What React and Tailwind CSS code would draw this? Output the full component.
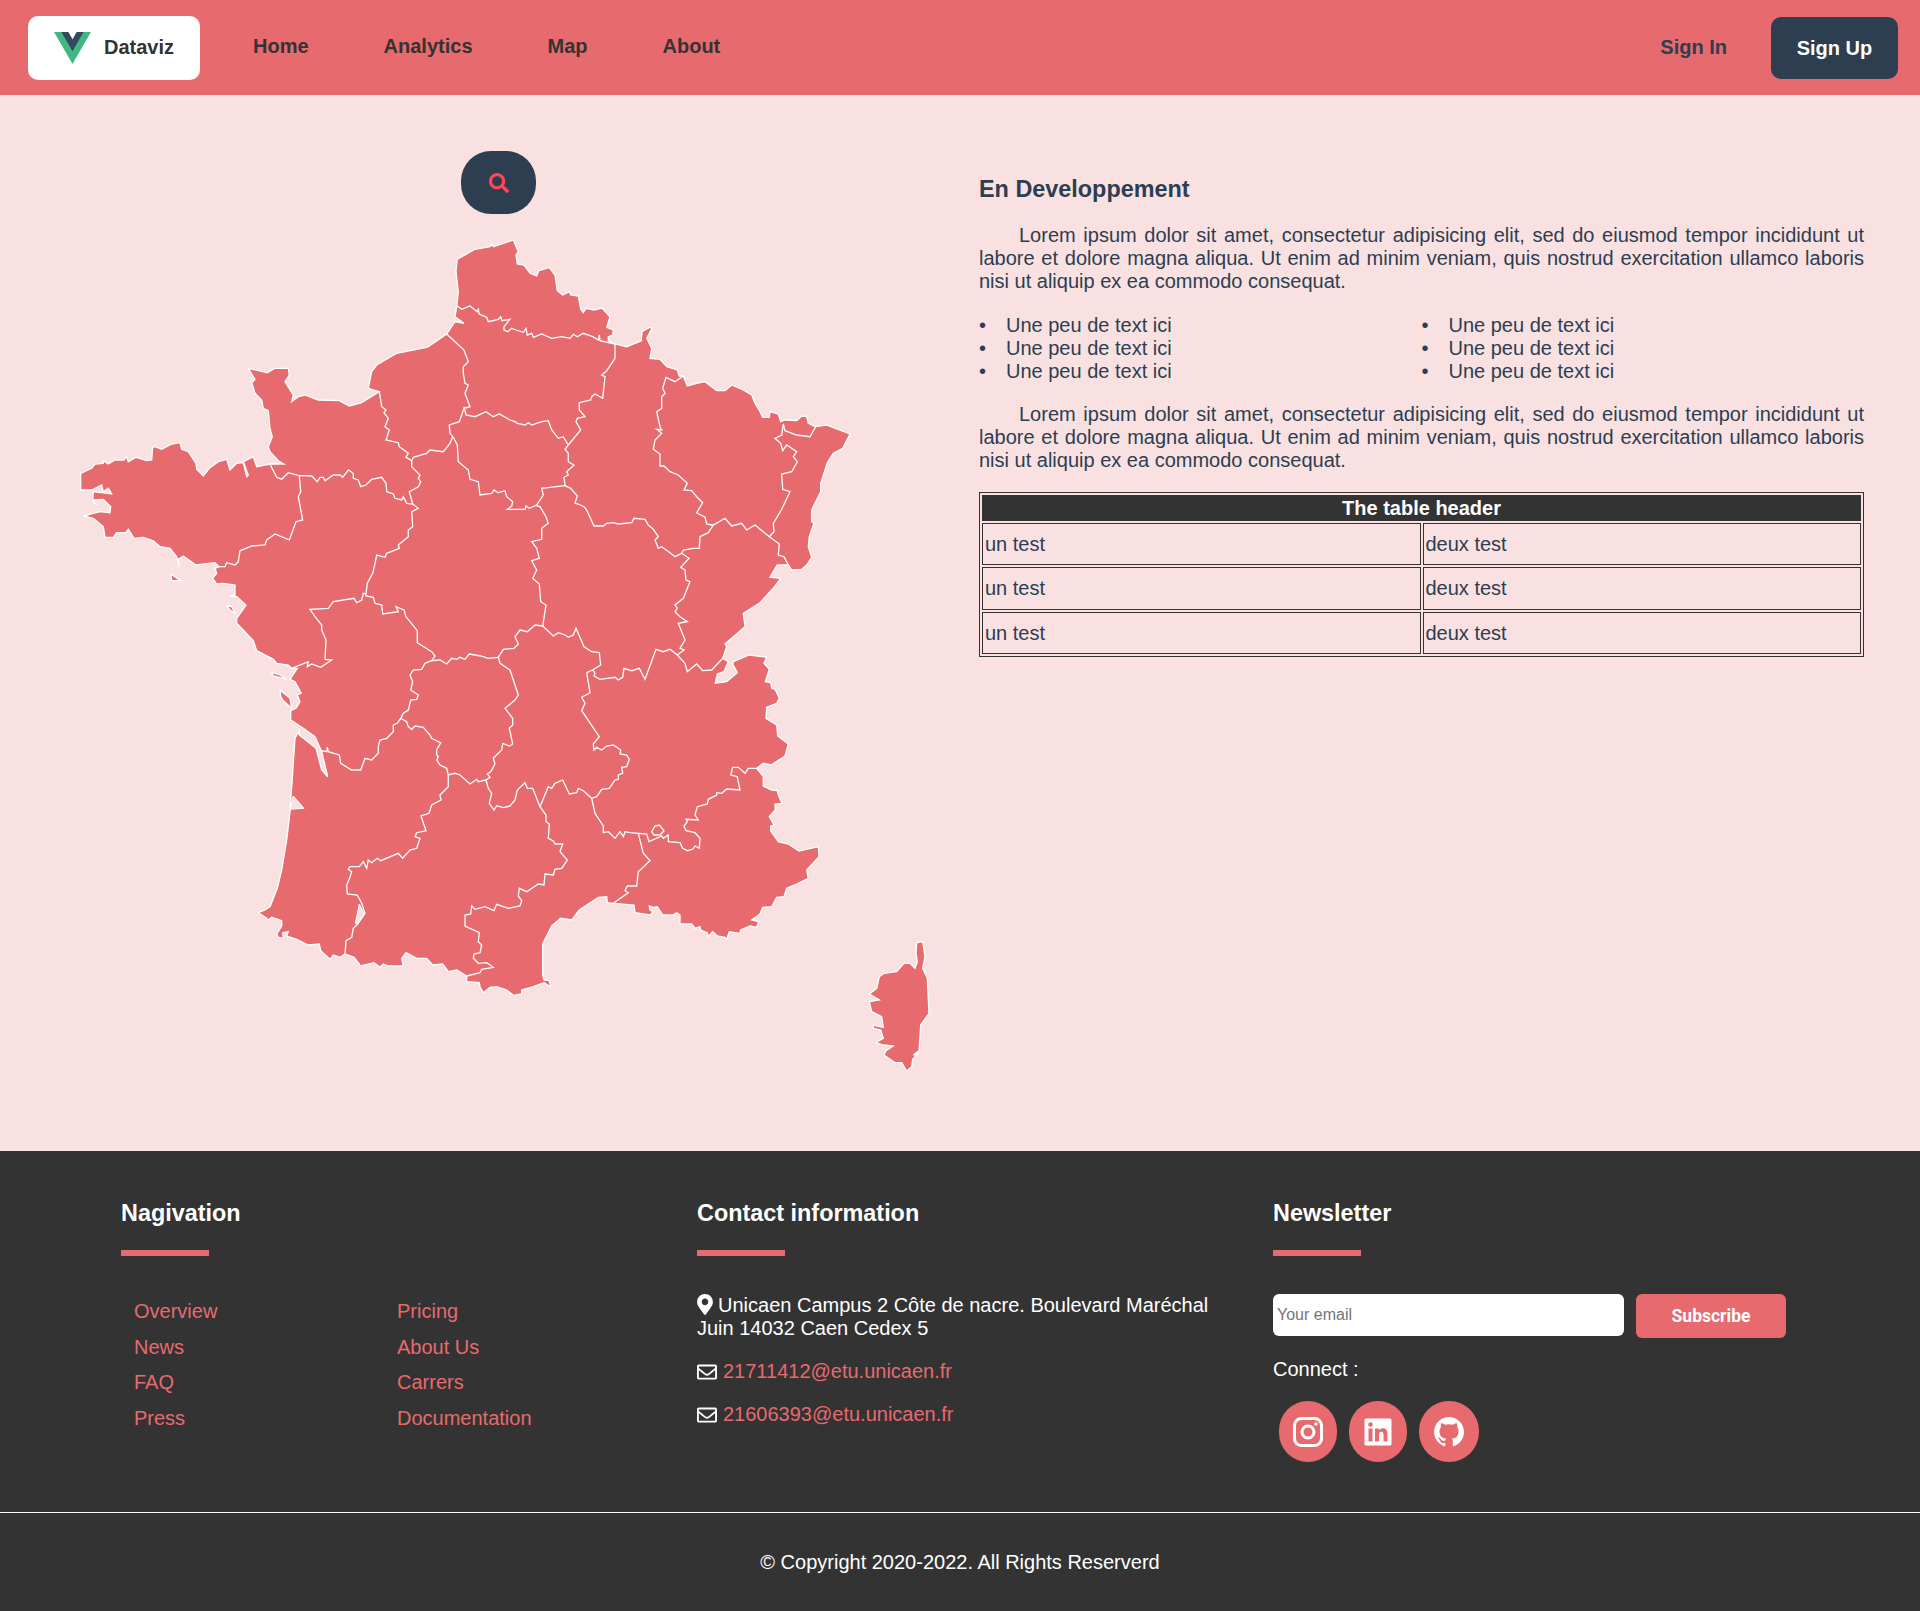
import { FaSearch, FaMapMarkerAlt, FaRegEnvelope } from "react-icons/fa";
import { BiLogoLinkedinSquare, BiLogoGithub } from "react-icons/bi";

// map coordinates were traced in four crops of the page, each with its own origin
const A = [60, 220];
const B = [440, 220];
const C = [240, 640];
const D = [600, 640];

const pts = (o, s) =>
  s.trim().split(/\s+/).map((p) => {
    const [x, y] = p.split(",").map(Number);
    return `${(o[0] + x / 3).toFixed(1)},${(o[1] + y / 3).toFixed(1)}`;
  }).join(" ");

const mainland = [
  pts(B, "52,118 105,88 150,80 155,72 160,80 190,70 220,60 235,95 228,105 232,132 252,135 270,160 290,168 296,152 328,143 345,165 352,212 368,225 388,215 392,225 415,228 422,268 430,278 438,265 462,270 486,264 510,290 500,322 520,330 518,345 505,350 505,362 525,372 560,380 604,362 606,335 630,322 636,325 620,355 635,385 630,415 660,418 680,440 712,450 718,468 730,468 742,498 770,490 795,485 830,512 855,512 875,495 910,510 935,525 945,550 960,575 968,592 988,592 990,575 1015,582 1022,605 1035,600 1070,602 1085,588 1100,590 1105,610 1125,620 1160,615 1178,622 1230,642 1208,685 1180,700 1162,728 1142,790 1142,815 1115,870 1115,905 1122,910 1108,950 1105,980 1115,1012 1100,1035 1085,1048 1055,1050 1045,1035 1012,1035 990,1072 1022,1075 1000,1105 960,1148 910,1180 915,1220 855,1272 860,1280 848,1315 865,1325 852,1355 832,1362 826,1390 860,1385 892,1358 878,1332 880,1325 928,1305 980,1312 972,1330 988,1348 976,1385 992,1388 995,1405 1005,1408 1018,1435 1010,1450 980,1462"),
  pts(D, "498,235 530,255 533,288 565,312 555,348 513,375 490,370 470,385 490,410 490,438 515,450 532,452 535,465 546,490 525,492 526,510 508,530 522,555 512,558 512,572 535,605 565,612 597,633 655,620 657,650 620,690 625,715 590,732 560,745 552,770 530,772 515,800 488,802 480,822 455,840 476,845 470,862 450,858 422,870 420,880 388,875 380,898 375,892 352,888 338,875 325,890 322,878 302,870 300,860 285,865 275,852 240,852 240,825 230,818 218,825 188,825 172,800 160,802 148,798 150,810 160,815 150,825 105,818 102,795 40,790"),
  pts(C, "1102,788 1100,770 1075,772 1055,785 1018,810 995,840 962,835 935,858 908,912 908,1005 912,1020 928,1022 932,1040 912,1028 880,1040 845,1050 845,1062 820,1066 800,1050 770,1040 750,1042 730,1058 720,1040 718,1028 680,1025 680,1008 650,990 625,995 608,972 578,975 560,955 530,955 498,938 485,955 490,978 445,978 430,972 420,982 402,968 362,978 342,952 315,942 300,952 280,945 270,958 242,932 238,912 205,915 170,898 140,888 145,875 128,878 130,895 115,892 110,882 125,858 125,842 95,832 85,840 80,835 55,818 75,810 90,800 112,745 125,690 140,600 150,515 165,295 178,272 178,285 228,325 245,390 263,410 245,335 225,290 190,265 152,240 152,212 168,205 180,185 172,165 184,160 165,125 150,118 172,85"),
  pts(A, "695,1345 685,1335 650,1330 640,1318 590,1292 580,1262 530,1210 530,1195 558,1155 530,1130 510,1128 525,1125 525,1095 490,1090 470,1092 458,1075 470,1060 465,1045 478,1040 465,1028 408,1035 370,1008 355,1018 358,1040 350,1010 330,985 300,980 280,962 250,952 222,955 205,928 198,938 170,938 160,952 135,952 130,920 100,895 70,888 120,875 150,878 152,860 130,838 100,840 110,855 98,845 100,815 155,822 145,805 130,815 125,795 95,810 62,810 62,760 95,745 105,732 130,730 130,722 145,732 165,720 192,720 198,708 205,725 228,712 260,722 275,720 278,682 285,680 305,688 335,672 360,668 365,688 385,695 408,730 410,748 430,768 448,745 475,725 500,718 510,750 530,730 550,728 560,770 565,765 550,725 580,710 590,740 630,732 672,732 655,722 630,695 625,680 637,650 630,625 625,572 610,565 605,540 585,520 575,488 585,478 565,445 622,458 645,445 685,445 688,465 675,485 700,525 695,545 715,530 735,525 775,540 838,542 868,558 905,548 958,515 925,505 935,455 950,435 1010,400 1100,382 1105,380 1160,342 1185,305 1212,310 1185,290 1190,260 1195,215 1188,155"),
].join(" ");

const corsica = pts(D, "950,908 968,905 975,950 968,985 982,1015 987,1120 962,1155 957,1232 940,1245 952,1242 938,1258 935,1280 920,1293 905,1268 885,1268 852,1245 858,1232 880,1218 850,1215 828,1208 850,1195 842,1170 820,1165 820,1155 850,1162 845,1130 815,1115 808,1085 838,1080 808,1062 830,1045 838,1010 852,1000 890,995 912,970 930,970 945,985 952,965 948,940");

// inner borders between the regions
const borders = [
  pts(B, "48,255 65,268 90,258 112,275 115,268 118,282 140,292 145,305 175,298 182,290 186,302 210,298 192,320 192,330 203,335 215,325 228,330 250,337 258,325 262,345 275,340 280,352 305,342 335,355 365,350 390,355 400,343 412,350 430,340 458,350 475,360 478,345 480,362 525,372"),
  pts(A, "1160,342 1212,390 1225,425 1210,440 1210,460 1215,490 1225,495 1215,520 1230,560 1212,565 1198,605 1168,615 1170,640 1178,650 1170,670 1150,695 1110,690 1100,700 1060,712 1055,722"),
  pts(A, "958,515 965,560 978,570 972,578 985,595 975,620 988,630 978,660 1015,668 1018,680 1045,700 1038,712 1055,722 1055,740 1080,765 1075,775 1082,785 1075,800 1048,815 1058,852"),
  pts(A, "630,733 650,772 665,778 685,758 718,767 722,815 715,830 728,900 708,905 688,960 645,942 620,960 615,975 575,978 558,985 540,992 535,1025 525,1035 500,1028 495,1040 478,1040"),
  pts(A, "718,767 755,768 772,785 780,772 790,772 795,782 820,765 840,765 848,772 865,750 880,760 880,775 895,780 902,800 918,795 935,778 965,772 978,790 980,815 1000,822 1005,835 1025,840 1030,830 1040,850 1058,852 1075,865 1055,875 1058,920 1045,930 1045,950 1015,975 1018,985 980,1000 975,1012 950,1005 945,1030 938,1060 922,1090 918,1122"),
  pts(A, "918,1122 910,1120 905,1140 890,1148 882,1135 820,1145 805,1165 750,1168 765,1190 785,1215 785,1230 798,1260 795,1318 815,1320 782,1342 755,1332 742,1340 745,1325 695,1345"),
  pts(A, "918,1122 918,1128 940,1132 945,1150 965,1155 968,1182 1015,1175 1008,1160 1032,1170 1038,1190 1072,1232 1072,1268 1115,1295 1125,1308 1115,1322 1140,1320 1160,1332 1175,1315 1190,1318 1200,1312 1215,1318 1228,1302 1262,1308 1285,1315 1315,1312"),
  pts(A, "1115,1322 1095,1330 1085,1348 1060,1350 1050,1365 1058,1385 1052,1410 1075,1425 1070,1438 1052,1440 1045,1470 1030,1480 1020,1500"),
  pts(C, "482,235 472,250 460,255 460,275 440,295 420,300 415,320 415,340 395,360 375,355 362,390 335,390 302,370 298,345 265,335 262,322 260,335 245,332"),
  pts(C, "482,235 500,245 505,260 515,268 525,258 550,262 570,285 575,295 602,308 590,330 590,345 595,350 590,360 600,375 620,385 625,405 645,400 660,405 690,432 710,418 715,425 738,420"),
  pts(C, "775,52 780,70 810,90 835,165 825,180 795,205 818,235 818,255 808,265 818,312 808,318 788,310 785,330 760,355 765,372 752,395 742,402 750,412 738,420"),
  pts(C, "625,405 625,440 600,465 603,480 575,495 567,520 543,528 558,572 530,578 525,590 540,595 530,625 510,630 488,655 475,640 422,662 412,655 395,668 385,660 380,685 370,665 358,680 330,680 325,688 335,695 330,712 320,735 322,762 352,765 365,790 375,820 355,850 340,865 335,892 318,902 315,942"),
  pts(C, "738,420 745,445 755,460 748,490 762,510 770,497 790,503 810,498 825,480 832,450 855,428 862,445 878,445 900,500 925,440 935,445 945,430 968,420 988,462 1010,458 1015,445 1030,452 1055,475 1070,470 1085,448 1108,445 1125,420 1135,418 1135,405 1148,400 1145,382 1160,380 1168,358 1160,345 1140,342 1142,330 1120,315 1100,318 1085,330 1070,322 1062,330 1060,312 1078,290 1025,212 1035,190 1025,172 1050,158 1040,98"),
  pts(B, "308,1218 340,1248 355,1238 375,1245 385,1252 400,1245 408,1225 432,1280 455,1295 478,1298 482,1335 458,1350 465,1360 462,1368 480,1378 525,1372 535,1380 548,1372 552,1345 575,1352 598,1345 615,1378 648,1288 670,1295 690,1288 712,1305 735,1330 742,1355 770,1332 788,1352 815,1350 848,1315"),
  pts(B, "458,1350 440,1358"),
  pts(B, "175,1312 190,1288 222,1285 235,1272 225,1250 240,1230 262,1235 285,1215 308,1218 318,1155 302,1145 298,1092 278,1075 290,1050 275,1022 298,1015 290,985 275,965 305,958 305,925 325,910 318,890 300,860 290,858"),
  pts(B, "72,560 78,585 105,590 138,575 160,590 178,582 210,600 225,605 232,610 255,615 265,608 275,615 305,605 325,602 335,630 355,655 370,650 385,675"),
  pts(B, "40,652 52,675 55,725 85,750 90,778 115,785 120,825 155,820 162,810 175,818 195,812 200,830 218,845 215,858 202,868 255,868 258,858 268,865 290,855 310,825 305,805 375,797"),
  pts(B, "385,675 375,688 385,700 385,725 402,735 380,755 385,765 372,772 375,797 392,805 412,828 405,850 415,852 432,860 440,870 462,918 490,918 500,910 520,908 535,912 575,908 582,895 615,898 625,915 640,928 655,950 645,960 655,985 665,980 690,998 705,1010 725,1000 730,990 760,985 778,985 780,950 805,938 820,915"),
  pts(B, "525,372 525,415 500,452 485,465 495,470 488,535 465,522 455,530 452,540 418,548 418,570 435,590 412,595 408,605 422,630 385,675"),
  pts(B, "730,468 705,485 678,472 668,505 675,520 665,530 665,565 650,575 660,620 665,630 650,628 665,640 645,660 640,688 660,702 660,738 672,738 690,755 715,765 742,790 732,810 755,812 770,830 788,848 770,878 795,892 800,912 815,915 820,915 855,895 875,918 905,910 920,930 945,915 988,950"),
  pts(B, "725,1000 747,1015 722,1042 735,1050 738,1080 750,1085 730,1135 705,1155 712,1165 705,1175 720,1190 742,1205 715,1210 725,1235 735,1260 720,1285 732,1290 712,1305"),
  pts(B, "1045,1035 1032,1010 1015,1005 1018,972 988,950 1002,935 1000,910 1025,868 1050,815 1028,808 1025,762 1055,755 1072,725 1060,710 1070,695 1040,675 1028,692 1022,670 1005,655 1025,645 1030,612 1035,632 1070,645 1110,650 1127,620"),
  pts(C, "1055,475 1065,520 1090,558 1090,578 1105,575 1125,595 1140,575 1150,590 1155,575 1170,578 1195,580 1210,640 1230,662 1195,695 1190,738 1162,738 1155,752 1165,758 1120,790"),
  pts(D, "115,580 140,582 147,605 185,588 190,595 205,585 205,605 240,608 248,625 262,632 278,628 285,618 298,625 300,595 285,578 258,572 252,558 262,545 258,538 295,540 285,525 292,500 322,492 325,478 350,465 350,458 365,460 380,447 420,450 412,410 392,405 398,382 415,382 435,400 445,385 470,385"),
  pts(C, "900,500 918,525 918,545 928,552 925,595 940,603 945,612 968,612 960,635 982,660 965,685 945,688 940,705 915,702 912,735 895,732 860,755 838,745 835,768 845,782 840,798 805,805 770,793 762,812 735,800 705,808 695,798 692,822 675,825 675,858 718,878 715,905 725,915 720,938 702,942 700,955 715,970 740,968 760,982 725,988 720,998 680,1008"),
];

// islands and the little enclave, same colour as the land
const islands = [
  pts(A, "332,1062 362,1082 335,1082"),
  pts(A, "500,1158 515,1160 525,1180 510,1170"),
  pts(C, "95,97 120,105 140,118 118,112 100,108"),
  pts(C, "120,150 150,175 155,205 130,182 122,170"),
  pts(D, "155,575 165,558 178,555 192,572 180,585 162,585"),
];

// water inside the land
const holes = [
  pts(C, "160,468 192,505 150,508"),
  pts(C, "358,792 372,820 352,850 346,850"),
];

function FranceMap() {
  return (
    <svg viewBox="70 240 880 840" className="w-[880px] h-[840px] ml-[70px] mt-[26px]">
      <g className="fill-[#e76a6e] stroke-white" strokeWidth="1.3">
        <polygon points={mainland} />
        <polygon points={corsica} />
        {islands.map((p) => (
          <polygon key={p} points={p} />
        ))}
      </g>
      <g className="fill-[#f9e1e2] stroke-white" strokeWidth="1">
        {holes.map((p) => (
          <polygon key={p} points={p} />
        ))}
      </g>
      <g className="fill-none stroke-white" strokeWidth="1.3">
        {borders.map((p) => (
          <polyline key={p} points={p} />
        ))}
      </g>
    </svg>
  );
}

function InstagramIcon() {
  return (
    <svg viewBox="0 0 30 30" className="w-[30px] h-[30px] fill-none stroke-white" strokeWidth="3">
      <rect x="1.5" y="1.5" width="27" height="27" rx="7" />
      <circle cx="15" cy="15" r="6" />
      <circle cx="23" cy="7" r="1.8" className="fill-white stroke-none" />
    </svg>
  );
}

function Header() {
  return (
    <header className="h-[95px] bg-[#e76a6e] flex items-center pl-[28px] pr-[22px]">
      <div className="w-[172px] h-[64px] bg-white rounded-[10px] flex items-center pl-[26px] gap-[13px]">
        <svg viewBox="0 0 261.76 226.69" className="w-[37px] h-[32px]">
          <path d="M161.096.001l-30.225 52.351L100.647.001H-.005l130.877 226.688L261.749.001z" fill="#41b883" />
          <path d="M161.096.001l-30.225 52.351L100.647.001H52.346l78.526 136.01L209.398.001z" fill="#34495e" />
        </svg>
        <span className="text-[20px] font-bold text-[#333] -mt-[1px]">Dataviz</span>
      </div>
      <nav className="flex gap-[75px] ml-[53px] text-[20px] font-bold text-[#333] -mt-[4px]">
        <a>Home</a>
        <a>Analytics</a>
        <a>Map</a>
        <a>About</a>
      </nav>
      <a className="ml-auto mr-[44px] text-[20px] font-bold text-[#2c3e50] -mt-[1px]">Sign In</a>
      <button className="w-[127px] h-[62px] rounded-[10px] bg-[#2c3e50] text-white text-[20px] font-bold">Sign Up</button>
    </header>
  );
}

function Lines() {
  return [1, 2, 3].map((i) => (
    <li key={i} className="relative before:absolute before:left-[-27px] before:content-['•']">
      Une peu de text ici
    </li>
  ));
}

function Content() {
  const lorem =
    "Lorem ipsum dolor sit amet, consectetur adipisicing elit, sed do eiusmod tempor incididunt ut labore et dolore magna aliqua. Ut enim ad minim veniam, quis nostrud exercitation ullamco laboris nisi ut aliquip ex ea commodo consequat.";
  return (
    <div className="w-[885px] pt-[81px] text-[20px] leading-[23px] text-[#2c3e50]">
      <h2 className="text-[23.4px] font-bold leading-[26px]">En Developpement</h2>
      <p className="mt-[22px] text-justify indent-[40px]">{lorem}</p>
      <div className="grid grid-cols-2 mt-[21px]">
        <ul className="pl-[27px]">
          <Lines />
        </ul>
        <ul className="pl-[27px]">
          <Lines />
        </ul>
      </div>
      <p className="mt-[20px] text-justify indent-[40px]">{lorem}</p>
      <table className="w-full mt-[20px] table-fixed border-separate border-spacing-[2px] border border-[#333]">
        <thead>
          <tr>
            <th colSpan="2" className="bg-[#333] text-white h-[26px] p-0">The table header</th>
          </tr>
        </thead>
        <tbody>
          <tr>
            <td className="border border-[#333] h-[42px] px-[2px] py-0">un test</td>
            <td className="border border-[#333] h-[42px] px-[2px] py-0">deux test</td>
          </tr>
          <tr>
            <td className="border border-[#333] h-[43px] px-[2px] py-0">un test</td>
            <td className="border border-[#333] h-[43px] px-[2px] py-0">deux test</td>
          </tr>
          <tr>
            <td className="border border-[#333] h-[42px] px-[2px] py-0">un test</td>
            <td className="border border-[#333] h-[42px] px-[2px] py-0">deux test</td>
          </tr>
        </tbody>
      </table>
    </div>
  );
}

function FooterTitle({ children }) {
  return (
    <div>
      <h3 className="text-[23.4px] font-bold leading-[28px] text-white">{children}</h3>
      <div className="w-[88px] h-[6px] bg-[#e76a6e] mt-[23px]"></div>
    </div>
  );
}

function SocialIcon({ width, children }) {
  return (
    <a style={{ width }} className="h-[61px] rounded-full bg-[#e76a6e] flex items-center justify-center text-white text-[36px]">
      {children}
    </a>
  );
}

function Footer() {
  const links = ["Overview", "Pricing", "News", "About Us", "FAQ", "Carrers", "Press", "Documentation"];
  return (
    <footer className="h-[460px] bg-[#333] text-white text-[20px] leading-[23px]">
      <div className="h-[362px] grid grid-cols-[576px_576px_1fr] pl-[121px] pt-[48px] border-b border-white">
        <div>
          <FooterTitle>Nagivation</FooterTitle>
          <div className="grid grid-cols-[263px_263px] pl-[13px] mt-[44px] auto-rows-[35.5px] text-[#e76a6e]">
            {links.map((l) => (
              <a key={l}>{l}</a>
            ))}
          </div>
        </div>
        <div className="w-[520px]">
          <FooterTitle>Contact information</FooterTitle>
          <p className="mt-[38px]">
            <FaMapMarkerAlt className="inline-block w-[16px] h-[21px] align-[-3px] mr-[5px]" />
            Unicaen Campus 2 Côte de nacre. Boulevard Maréchal Juin 14032 Caen Cedex 5
          </p>
          <p className="mt-[20px] flex items-center gap-[6px]">
            <FaRegEnvelope className="text-[20px]" />
            <span className="text-[#e76a6e]">21711412@etu.unicaen.fr</span>
          </p>
          <p className="mt-[20px] flex items-center gap-[6px]">
            <FaRegEnvelope className="text-[20px]" />
            <span className="text-[#e76a6e]">21606393@etu.unicaen.fr</span>
          </p>
        </div>
        <div>
          <FooterTitle>Newsletter</FooterTitle>
          <div className="flex items-start mt-[38px] gap-[12px]">
            <input
              placeholder="Your email"
              className="w-[351px] h-[42px] bg-white rounded-[6px] px-[4px] text-[16px] text-black placeholder:text-[#757575]"
            />
            <button className="w-[150px] h-[44px] rounded-[6px] bg-[#e76a6e] text-white text-[17.5px] font-bold font-['Roboto',sans-serif]">
              Subscribe
            </button>
          </div>
          <p className="mt-[20px]">Connect :</p>
          <div className="flex mt-[20px] ml-[6px] gap-[12px]">
            <SocialIcon width={58}><InstagramIcon /></SocialIcon>
            <SocialIcon width={58}><BiLogoLinkedinSquare /></SocialIcon>
            <SocialIcon width={60}><BiLogoGithub /></SocialIcon>
          </div>
        </div>
      </div>
      <p className="text-center mt-[38px]">© Copyright 2020-2022. All Rights Reserverd</p>
    </footer>
  );
}

export default function App() {
  return (
    <div className="font-['Liberation_Sans',Arial,sans-serif] bg-[#f9e1e2]">
      <Header />
      <main className="h-[1056px] flex">
        <div className="w-[979px] shrink-0">
          <button className="block ml-[461px] mt-[56px] w-[75px] h-[63px] rounded-[30px] bg-[#2c3e50] text-[#ff4757] text-[20px]">
            <FaSearch className="mx-auto" />
          </button>
          <FranceMap />
        </div>
        <Content />
      </main>
      <Footer />
    </div>
  );
}
